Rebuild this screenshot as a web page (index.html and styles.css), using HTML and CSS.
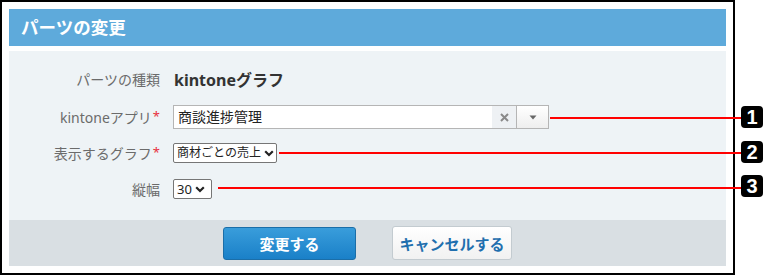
FILE: index.html
```html
<!DOCTYPE html>
<html lang="ja">
<head>
<meta charset="utf-8">
<title>パーツの変更</title>
<link rel="stylesheet" href="styles.css">
</head>
<body>
<div class="frame">
  <div class="panel">
    <div class="header">パーツの変更</div>
    <div class="form">
      <div class="row row-first">
        <div class="label">パーツの種類</div>
        <div class="value">kintoneグラフ</div>
      </div>
      <div class="row">
        <div class="label">kintoneアプリ<span class="req">*</span></div>
        <div class="combo">
          <span class="combo-text">商談進捗管理</span>
          <span class="combo-clear">
            <svg width="9" height="9" viewBox="0 0 9 9"><path d="M1 1L8 8M8 1L1 8" stroke="#8a8a8a" stroke-width="2"/></svg>
          </span>
          <span class="combo-arrow">
            <svg width="8" height="5" viewBox="0 0 8 5"><path d="M0.5 0.5H7.5L4 4.5Z" fill="#666"/></svg>
          </span>
        </div>
      </div>
      <div class="row">
        <div class="label">表示するグラフ<span class="req">*</span></div>
        <div class="select select-graph">
          <span class="select-text">商材ごとの売上</span>
          <svg class="chev" width="10" height="7" viewBox="0 0 10 7"><path d="M1.2 1.3L5 5L8.8 1.3" fill="none" stroke="#222" stroke-width="2.2"/></svg>
        </div>
      </div>
      <div class="row">
        <div class="label">縦幅</div>
        <div class="select select-height">
          <span class="select-text">30</span>
          <svg class="chev" width="10" height="7" viewBox="0 0 10 7"><path d="M1.2 1.3L5 5L8.8 1.3" fill="none" stroke="#222" stroke-width="2.2"/></svg>
        </div>
      </div>
    </div>
    <div class="footer">
      <button class="btn btn-primary" type="button">変更する</button>
      <button class="btn btn-cancel" type="button">キャンセルする</button>
    </div>
  </div>
</div>
<div class="callout-line line-1"></div>
<div class="callout-line line-2"></div>
<div class="callout-line line-3"></div>
<div class="badge badge-1">1</div>
<div class="badge badge-2">2</div>
<div class="badge badge-3">3</div>
</body>
</html>
```

FILE: styles.css
```css
html, body {
  margin: 0;
  padding: 0;
  background: #ffffff;
}
body {
  width: 765px;
  height: 277px;
  position: relative;
  overflow: hidden;
  font-family: "Noto Sans", "Noto Sans CJK JP", sans-serif;
}
.frame {
  width: 717px;
  height: 257px;
  padding: 7px;
  border: 2px solid #000;
}
.panel {
  width: 717px;
}
.header {
  height: 37px;
  background: #5eaadb;
  color: #fff;
  font-weight: 700;
  font-size: 17.5px;
  line-height: 37px;
  padding-left: 12px;
}
.form {
  margin-top: 5px;
  background: #eef3f6;
  height: 169px;
  box-sizing: border-box;
  padding-top: 15px;
  display: flex;
  flex-direction: column;
  gap: 10px;
}
.row {
  display: grid;
  grid-template-columns: 151px 1fr;
  column-gap: 13px;
  align-items: center;
  height: 26px;
}
.row-first {
  margin-bottom: 2px;
}
.label {
  text-align: right;
  font-size: 14px;
  color: #6b6b6b;
  white-space: nowrap;
}
.req {
  color: #e8303d;
  font-size: 13px;
  margin-left: 1px;
  position: relative;
  top: -2px;
}
.value {
  font-size: 16px;
  font-weight: 700;
  color: #333;
  margin-left: 1px;
}
.combo {
  width: 376px;
  height: 24px;
  box-sizing: border-box;
  border: 1px solid #b5b5b5;
  background: #fff;
  display: flex;
  align-items: stretch;
}
.combo-text {
  flex: 1;
  font-size: 14px;
  color: #222;
  padding-left: 4px;
  line-height: 22px;
}
.combo-clear {
  width: 24px;
  background: #eef1f4;
  display: flex;
  align-items: center;
  justify-content: center;
}
.combo-arrow {
  width: 31px;
  border-left: 1px solid #b5b5b5;
  background: linear-gradient(#ffffff, #eeeeee);
  display: flex;
  align-items: center;
  justify-content: center;
}
.select {
  display: flex;
  align-items: center;
  box-sizing: border-box;
  border: 1px solid #767676;
  border-radius: 2px;
  background: #fff;
  font-size: 12px;
  color: #222;
  padding-left: 3px;
  gap: 3px;
  white-space: nowrap;
  overflow: hidden;
}
.select-text {
  flex: none;
  line-height: 18px;
}
.select-graph {
  width: 104px;
  height: 20px;
}
.select-height {
  width: 39px;
  height: 20px;
  font-size: 13px;
}
.chev {
  flex: none;
}
.footer {
  height: 46px;
  background: #d9dfe3;
  display: flex;
  justify-content: center;
  align-items: center;
  gap: 36px;
}
.btn {
  font-family: "Noto Sans", "Noto Sans CJK JP", sans-serif;
  font-size: 15px;
  font-weight: 700;
  border-radius: 3px;
  padding: 0;
  cursor: pointer;
}
.btn-primary {
  width: 133px;
  height: 33px;
  color: #fff;
  border: 1px solid #1b6ea8;
  background: linear-gradient(#399ddb, #1a80c8);
}
.btn-cancel {
  width: 120px;
  height: 34px;
  color: #1f6fae;
  border: 1px solid #c3cbd0;
  background: linear-gradient(#ffffff, #f1f1f1);
}
.callout-line {
  position: absolute;
  height: 2px;
  background: #ff0000;
}
.line-1 { left: 550px; top: 117px; width: 192px; }
.line-2 { left: 279px; top: 152px; width: 463px; }
.line-3 { left: 218px; top: 187px; width: 524px; }
.badge {
  position: absolute;
  left: 741px;
  width: 22px;
  height: 22px;
  border-radius: 4px;
  background: #000;
  color: #fff;
  font-family: "Liberation Sans", Arial, sans-serif;
  font-weight: 700;
  font-size: 20px;
  line-height: 22px;
  text-align: center;
}
.badge-1 { top: 106px; }
.badge-2 { top: 141px; }
.badge-3 { top: 175px; }
```
